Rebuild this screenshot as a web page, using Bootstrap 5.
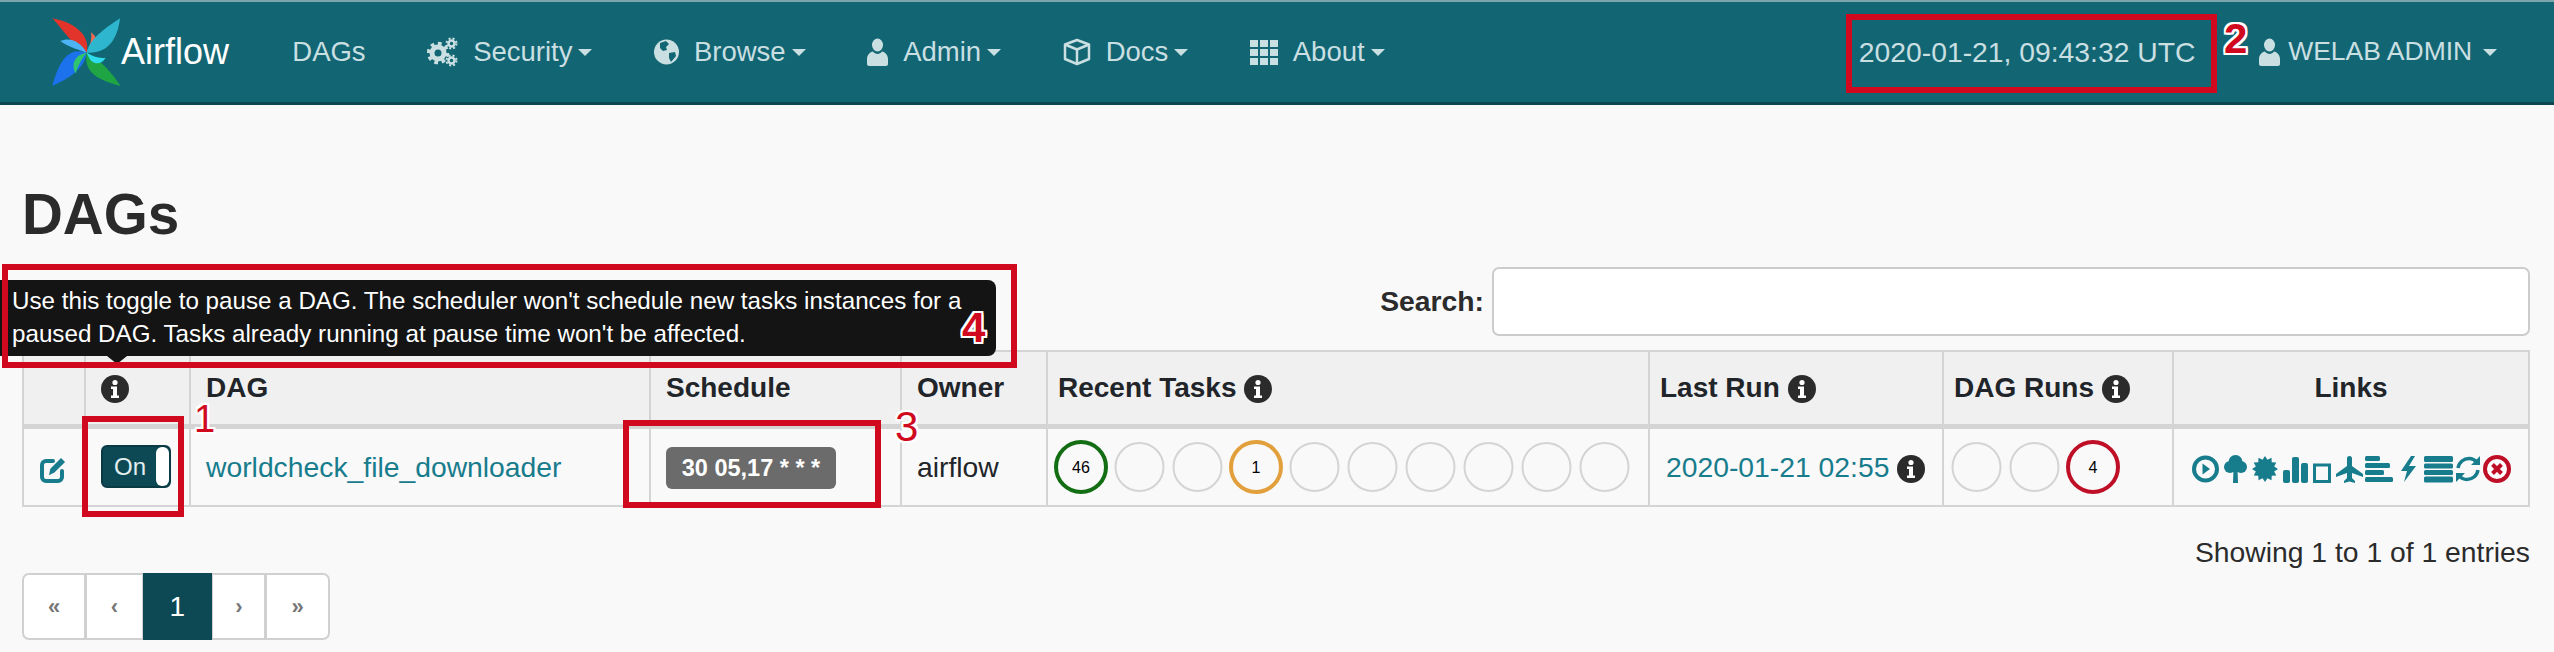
<!DOCTYPE html>
<html lang="en">

<head>
  <meta charset="UTF-8">
  <meta name="viewport" content="width=device-width, initial-scale=1.0">
  <title>DAGs - Airflow</title>
  <link href="https://cdn.jsdelivr.net/npm/bootstrap@5.3.0/dist/css/bootstrap.min.css" rel="stylesheet">
  <style>
    html, body {
      height: 652px;
      overflow: hidden;
    }

    body {
      position: relative;
      background: #f9f9fa;
      font-family: "Liberation Sans", Arial, sans-serif;
      font-size: 28.3px;
      color: #2b2b2b;
    }

    a {
      color: #177c8c;
      text-decoration: none;
    }

    .top-bar {
      --bs-navbar-nav-link-padding-x: 30.75px;
      height: 105px;
      padding: 0 26px 0 49px;
      background: #126673;
      border-top: 2px solid #7ba6ae;
      border-bottom: 3px solid #0d4550;
    }

    .top-bar .navbar-brand {
      display: flex;
      align-items: center;
      margin: 0 32.5px 0 0;
      padding: 0;
      font-size: 36px;
      color: #fff;
    }

    .top-bar .nav-link {
      display: flex;
      align-items: center;
      gap: 15px;
      font-size: 27.5px;
      color: #c9dfe2;
    }

    .top-bar .user-link {
      gap: 8px;
      font-size: 26.5px;
    }

    .top-bar .dropdown-toggle::after {
      margin-left: -9px;
      border-top: 7px solid;
      border-right: 7px solid transparent;
      border-left: 7px solid transparent;
      border-bottom: 0;
    }

    .top-bar .user-link.dropdown-toggle::after {
      margin-left: 3px;
    }

    .clock-text {
      margin-right: 33px;
      color: #c9dfe2;
    }

    .dag-page {
      padding: 0 24px 0 22px;
    }

    .page-title {
      margin: 79px 0 21px;
      font-size: 56.6px;
      font-weight: 700;
      line-height: 62px;
      color: #2b2b2b;
    }

    .search-row {
      height: 69px;
      margin-bottom: 14px;
    }

    .search-row label {
      margin-right: 8px;
      font-weight: 700;
    }

    .search-box {
      width: 1038px;
      height: 69px;
      background: #fff;
      border: 2px solid #ccc;
      border-radius: 7px;
    }

    .dag-table {
      width: 2506px;
      margin: 0;
      table-layout: fixed;
      --bs-table-bg: transparent;
      --bs-table-border-color: #d4d4d4;
    }

    .dag-table > :not(caption) > * > * {
      padding: 0 15px;
      border-width: 2.5px;
      vertical-align: middle;
    }

    .dag-table thead th {
      height: 75px;
      background: #f0f0f1;
      border-bottom-width: 5px;
      font-size: 28px;
      font-weight: 700;
    }

    .dag-table tbody td {
      height: 80px;
    }

    .dag-table .tight-cell {
      padding-left: 10px;
    }

    .dag-table .dots-cell {
      padding-left: 6px;
    }

    .dag-table .last-run-cell {
      padding-left: 16px;
    }

    .col-edit { width: 62px; }
    .col-toggle { width: 105px; }
    .col-dag { width: 460px; }
    .col-sched { width: 251px; }
    .col-owner { width: 146px; }
    .col-tasks { width: 602px; }
    .col-last { width: 294px; }
    .col-runs { width: 230px; }
    .col-links { width: 356px; }

    .toggle-pill {
      width: 70px;
      height: 43px;
      padding-left: 11px;
      background: #0d4954;
      border: 2px solid #0a3a44;
      border-radius: 6px;
      overflow: hidden;
      font-size: 24px;
      color: #e3eef0;
    }

    .toggle-handle {
      width: 13px;
      height: 100%;
      margin-left: auto;
      background: #fff;
      border-radius: 6px;
    }

    .sched-badge {
      padding: 0;
      width: 170px;
      height: 42px;
      line-height: 42px;
      background: #6b6b6b;
      border-radius: 6px;
      font-size: 23.5px;
      font-weight: 700;
      color: #fff;
    }

    .stat-dots {
      gap: 5px;
    }

    .link-icons {
      gap: 5px;
    }

    .link-icons .snug {
      margin-left: -3px;
    }

    .link-icons .roomy {
      margin-left: 2px;
    }

    .entries-info {
      margin-top: 29px;
      line-height: 32px;
      text-align: right;
    }

    .page-list {
      margin: 5px 0 0;
      --bs-pagination-color: #777;
      --bs-pagination-font-size: 22px;
      --bs-pagination-bg: #fff;
      --bs-pagination-border-color: #d0d0d0;
      --bs-pagination-border-width: 2px;
      --bs-pagination-border-radius: 7px;
      --bs-pagination-active-bg: #0d4954;
      --bs-pagination-active-border-color: #0d4954;
      --bs-pagination-active-color: #fff;
      --bs-pagination-padding-x: 24px;
      --bs-pagination-padding-y: 0;
    }

    .page-list .page-link {
      height: 67px;
      line-height: 63px;
      font-weight: 700;
    }

    .page-list .step-link {
      padding: 0 22px;
    }

    .page-list .step-prev {
      padding: 0 23.5px;
    }

    .page-list .active .page-link {
      padding: 0 25px;
      font-size: 28px;
      font-weight: 400;
    }

    .hint-tip {
      position: absolute;
      top: 280px;
      left: 0;
      width: 996px;
      height: 76px;
      padding: 5px 0 0 12px;
      background: #141414;
      border-radius: 0 8px 8px 0;
      font-size: 24.2px;
      line-height: 32.5px;
      color: #fff;
    }

    .hint-tip::after {
      content: "";
      position: absolute;
      left: 107px;
      bottom: -8px;
      border-top: 8px solid #141414;
      border-right: 10px solid transparent;
      border-left: 10px solid transparent;
    }

    .mark-box {
      position: absolute;
      border: 6px solid #d0091e;
    }

    .mark-num {
      position: absolute;
      font-size: 38px;
      line-height: 38px;
      color: #d0091e;
      text-shadow: -2px 0 #fff, 2px 0 #fff, 0 -2px #fff, 0 2px #fff, -2px -2px #fff, 2px 2px #fff, -2px 2px #fff, 2px -2px #fff;
    }

    .mark-big {
      font-size: 42px;
    }
  </style>
</head>

<body>
  <svg width="0" height="0" class="d-block">
    <symbol id="ico-info" viewBox="0 0 28 28">
      <circle cx="14" cy="14" r="14" fill="#2b2b2b"/>
      <circle cx="14" cy="7.5" r="2.6" fill="#fff"/>
      <path d="M10 11.5h6v9h2v2.5H10v-2.5h2v-6.500h-2z" fill="#fff"/>
    </symbol>
    <symbol id="ico-user" viewBox="0 0 21 28">
      <ellipse cx="10.500" cy="7" rx="5.500" ry="6.500" fill="currentColor"/>
      <path d="M0 26c0 1 1 2 2 2h17c1 0 2-1 2-2v-5c0-4-3-7-6-7.500-1 1.500-2.800 2.500-4.500 2.500S7 15 6 13.500C3 14 0 17 0 21z" fill="currentColor"/>
    </symbol>
  </svg>

  <nav class="navbar navbar-expand top-bar">
    <a class="navbar-brand" href="#">
      <svg width="72" height="72" viewBox="90 35 216 216">
        <path d="M203 145C215 95 170 55 100 42 130 72 165 130 203 145z" fill="#e2342a"/>
        <path d="M203 145C238 132 246 108 216 84 220 105 212 128 203 145z" fill="#f56a50"/>
        <path d="M203 145C150 128 122 165 100 245 140 225 195 200 203 145z" fill="#1c72ec"/>
        <path d="M203 145C182 108 150 98 124 110 138 122 170 134 203 145z" fill="#4cb4f4"/>
        <path d="M203 145C192 205 240 228 305 245 280 208 245 165 203 145z" fill="#1fa544"/>
        <path d="M203 145C170 150 154 178 170 207 176 185 188 162 203 145z" fill="#30c46c"/>
        <path d="M203 145C262 150 295 110 303 42 270 65 212 100 203 145z" fill="#2eb6cf"/>
        <path d="M203 145C218 186 245 184 260 160 240 163 220 156 203 145z" fill="#2edcec"/>
      </svg>
      <span>Airflow</span>
    </a>
    <ul class="navbar-nav">
      <li class="nav-item"><a class="nav-link" href="#">DAGs</a></li>
      <li class="nav-item dropdown">
        <a class="nav-link dropdown-toggle" href="#">
          <svg width="31" height="30" viewBox="0 0 31 30" fill="none" stroke="currentColor">
            <circle cx="11" cy="16" r="6" stroke-width="5"/>
            <circle cx="11" cy="16" r="9.500" stroke-width="3.500" stroke-dasharray="3.700 3.700"/>
            <circle cx="24.500" cy="6.500" r="3" stroke-width="2.500"/>
            <circle cx="24.500" cy="6.500" r="5" stroke-width="2" stroke-dasharray="2 2"/>
            <circle cx="24.500" cy="23.500" r="3" stroke-width="2.500"/>
            <circle cx="24.500" cy="23.500" r="5" stroke-width="2" stroke-dasharray="2 2"/>
          </svg>
          Security
        </a>
      </li>
      <li class="nav-item dropdown">
        <a class="nav-link dropdown-toggle" href="#">
          <svg width="25" height="28" viewBox="0 0 25 28">
            <circle cx="12.500" cy="14" r="12.500" fill="currentColor"/>
            <path d="M6 5l6-2 3 3-3 3 1 3-4 1-3-3zM15 15l6-1 1 4-5 6-2-4z" fill="#126673"/>
          </svg>
          Browse
        </a>
      </li>
      <li class="nav-item dropdown">
        <a class="nav-link dropdown-toggle" href="#">
          <svg width="21" height="28"><use href="#ico-user"/></svg>
          Admin
        </a>
      </li>
      <li class="nav-item dropdown">
        <a class="nav-link dropdown-toggle" href="#">
          <svg width="28" height="28" viewBox="0 0 28 28" fill="none" stroke="currentColor" stroke-width="2.500" stroke-linejoin="round">
            <path d="M14 2l12 4.500v14.500L14 26 2 21V6.500z"/>
            <path d="M2 6.500l12 5 12-5M14 11.500V26"/>
          </svg>
          Docs
        </a>
      </li>
      <li class="nav-item dropdown">
        <a class="nav-link dropdown-toggle" href="#">
          <svg width="28" height="26" viewBox="0 0 28 26" fill="currentColor">
            <rect y="1" width="8" height="7"/><rect x="10" y="1" width="8" height="7"/><rect x="20" y="1" width="8" height="7"/>
            <rect y="10" width="8" height="7"/><rect x="10" y="10" width="8" height="7"/><rect x="20" y="10" width="8" height="7"/>
            <rect y="19" width="8" height="7"/><rect x="10" y="19" width="8" height="7"/><rect x="20" y="19" width="8" height="7"/>
          </svg>
          About
        </a>
      </li>
    </ul>
    <ul class="navbar-nav ms-auto align-items-center">
      <li class="nav-item clock-text">2020-01-21, 09:43:32 UTC</li>
      <li class="nav-item dropdown">
        <a class="nav-link dropdown-toggle user-link" href="#">
          <svg width="21" height="28"><use href="#ico-user"/></svg>
          WELAB ADMIN
        </a>
      </li>
    </ul>
  </nav>

  <div class="container-fluid dag-page">
    <h1 class="page-title">DAGs</h1>

    <div class="d-flex justify-content-end align-items-center search-row">
      <label for="dagSearch">Search:</label>
      <input id="dagSearch" class="search-box" type="search">
    </div>

    <table class="table table-bordered dag-table">
      <colgroup>
        <col class="col-edit"><col class="col-toggle"><col class="col-dag"><col class="col-sched"><col class="col-owner">
        <col class="col-tasks"><col class="col-last"><col class="col-runs"><col class="col-links">
      </colgroup>
      <thead>
        <tr>
          <th></th>
          <th><svg width="28" height="28"><use href="#ico-info"/></svg></th>
          <th>DAG</th>
          <th>Schedule</th>
          <th>Owner</th>
          <th class="tight-cell">Recent Tasks <svg width="28" height="28"><use href="#ico-info"/></svg></th>
          <th class="tight-cell">Last Run <svg width="28" height="28"><use href="#ico-info"/></svg></th>
          <th class="tight-cell">DAG Runs <svg width="28" height="28"><use href="#ico-info"/></svg></th>
          <th class="text-center">Links</th>
        </tr>
      </thead>
      <tbody>
        <tr>
          <td class="text-center">
            <a href="#">
              <svg width="28" height="28" viewBox="0 0 28 28" fill="none" stroke="currentColor" stroke-width="4" stroke-linecap="round">
                <path d="M22 16v6a4 4 0 0 1-4 4H6a4 4 0 0 1-4-4V10a4 4 0 0 1 4-4h7"/>
                <path d="M10 19l1-5L21 4l3 3-10 10z" fill="currentColor" stroke-width="1.500"/>
              </svg>
            </a>
          </td>
          <td>
            <div class="d-flex align-items-center toggle-pill">
              <span>On</span>
              <span class="toggle-handle"></span>
            </div>
          </td>
          <td><a href="#">worldcheck_file_downloader</a></td>
          <td><span class="badge sched-badge">30 05,17 * * *</span></td>
          <td>airflow</td>
          <td class="dots-cell" id="taskDots"></td>
          <td class="last-run-cell text-nowrap">
            <a href="#">2020-01-21 02:55</a>
            <svg width="28" height="28"><use href="#ico-info"/></svg>
          </td>
          <td class="dots-cell" id="runDots"></td>
          <td>
            <div class="d-flex justify-content-center link-icons">
              <a href="#"><svg width="27" height="28" viewBox="0 0 27 28"><circle cx="13.500" cy="14" r="11.500" fill="none" stroke="currentColor" stroke-width="4"/><path d="M10.500 8.500l7.500 5.500-7.500 5.500z" fill="currentColor"/></svg></a>
              <a href="#"><svg width="23" height="28" viewBox="0 0 23 28" fill="currentColor"><circle cx="11.500" cy="7" r="7"/><circle cx="6" cy="12" r="6"/><circle cx="17" cy="12" r="6"/><path d="M9.500 14h4l.5 14H9z"/></svg></a>
              <a href="#"><svg width="26" height="28" viewBox="0 0 26 28" fill="currentColor"><polygon points="26,14 22.180,16.460 24.260,20.500 19.720,20.720 19.500,25.260 15.460,23.180 13,27 10.540,23.180 6.500,25.260 6.280,20.720 1.740,20.500 3.820,16.460 0,14 3.820,11.540 1.740,7.500 6.280,7.280 6.500,2.740 10.540,4.820 13,1 15.460,4.820 19.500,2.740 19.720,7.280 24.260,7.500 22.180,11.540"/></svg></a>
              <a href="#"><svg width="25" height="28" viewBox="0 0 25 28" fill="currentColor"><rect y="15" width="7" height="13" rx="2"/><rect x="9" y="2" width="7" height="26" rx="2"/><rect x="18" y="8" width="7" height="20" rx="2"/></svg></a>
              <a href="#"><svg width="18" height="28" viewBox="0 0 18 28"><rect x="1.500" y="10" width="15" height="16.500" fill="none" stroke="currentColor" stroke-width="3"/></svg></a>
              <a href="#"><svg width="27" height="28" viewBox="0 0 27 28" fill="currentColor"><path d="M11 3.500a2.500 2.500 0 0 1 5 0V11l11 8v3l-11-4v5l3 3v2l-5.500-1.500L8 28v-2l3-3v-5L0 22v-3l11-8z"/></svg></a>
              <a href="#" class="snug"><svg width="28" height="28" viewBox="0 0 28 28" fill="currentColor"><rect y="1" width="15" height="5" rx="1.500"/><rect y="8" width="25" height="5" rx="1.500"/><rect y="15" width="19" height="5" rx="1.500"/><rect y="22" width="28" height="5" rx="1.500"/></svg></a>
              <a href="#" class="roomy"><svg width="17" height="28" viewBox="0 0 17 28" fill="currentColor"><path d="M11 1L1 16h6L4 27l12-16h-7l6-10z"/></svg></a>
              <a href="#" class="roomy"><svg width="29" height="28" viewBox="0 0 29 28" fill="currentColor"><rect y="1" width="29" height="6" rx="1.500"/><rect y="8.500" width="29" height="5" rx="1.500"/><rect y="15" width="29" height="5" rx="1.500"/><rect y="21.500" width="29" height="6" rx="1.500"/></svg></a>
              <a href="#" class="snug"><svg width="26" height="28" viewBox="0 0 26 28" fill="none" stroke="currentColor" stroke-width="3.500"><path d="M3 13C4 7 9 3.500 14 3.500c3.500 0 6 1.500 8 4"/><path d="M23 15c-1 6-6 9.500-11 9.500-3.500 0-6-1.500-8-4"/><path d="M25 1v9h-9zM1 27v-9h9z" fill="currentColor" stroke="none"/></svg></a>
              <a href="#" class="snug"><svg width="28" height="28" viewBox="0 0 28 28"><circle cx="14" cy="14" r="12" fill="#fff" stroke="#be0f26" stroke-width="4"/><path d="M9.500 9.500l9 9M18.500 9.500l-9 9" stroke="#be0f26" stroke-width="4"/></svg></a>
            </div>
          </td>
        </tr>
      </tbody>
    </table>

    <div class="entries-info">Showing 1 to 1 of 1 entries</div>

    <ul class="pagination page-list">
      <li class="page-item"><a class="page-link" href="#">«</a></li>
      <li class="page-item"><a class="page-link step-prev" href="#">‹</a></li>
      <li class="page-item active"><a class="page-link" href="#">1</a></li>
      <li class="page-item"><a class="page-link step-link" href="#">›</a></li>
      <li class="page-item"><a class="page-link" href="#">»</a></li>
    </ul>
  </div>

  <div class="hint-tip">Use this toggle to pause a DAG. The scheduler won't schedule new tasks instances for a<br>paused DAG. Tasks already running at pause time won't be affected.</div>

  <!-- annotation overlay drawn over the screenshot -->
  <div class="mark-box" style="left:82px;top:416px;width:102px;height:101px"></div>
  <div class="mark-box" style="left:623px;top:420px;width:258px;height:88px"></div>
  <div class="mark-box" style="left:1846px;top:14px;width:371px;height:79px"></div>
  <div class="mark-box" style="left:2px;top:264px;width:1015px;height:104px"></div>
  <span class="mark-num" style="left:194px;top:400px">1</span>
  <span class="mark-num mark-big fw-bold" style="left:2224px;top:20px">2</span>
  <span class="mark-num mark-big" style="left:895px;top:408px">3</span>
  <span class="mark-num mark-big fw-bold" style="left:962px;top:309px">4</span>

  <script>
    // state circles, same svg as the airflow page draws
    const taskStates = [
      { n: 46, color: "#136d13", w: 4 }, {}, {}, { n: 1, color: "#e2a03c", w: 4 },
      {}, {}, {}, {}, {}, {}
    ];
    const runStates = [{}, {}, { n: 4, color: "#be0f26", w: 4 }];

    function drawDots(id, states) {
      let html = '<div class="d-flex align-items-center stat-dots">';
      states.forEach(s => {
        const stroke = s.color || "#d4d4d4";
        const w = s.w || 2;
        const size = s.n ? 54 : 53;
        const label = s.n ? `<text x="27" y="33" text-anchor="middle" font-size="16" fill="#000">${s.n}</text>` : "";
        html += `<svg width="${size}" height="54"><circle cx="${size / 2}" cy="27" r="${(s.n ? 27 : 26) - w / 2 - (s.n ? 0 : 1)}" fill="none" stroke="${stroke}" stroke-width="${w}"/>${label}</svg>`;
      });
      document.getElementById(id).innerHTML = html + "</div>";
    }

    drawDots("taskDots", taskStates);
    drawDots("runDots", runStates);
  </script>

  <script src="https://cdn.jsdelivr.net/npm/bootstrap@5.3.0/dist/js/bootstrap.bundle.min.js"></script>
</body>

</html>
